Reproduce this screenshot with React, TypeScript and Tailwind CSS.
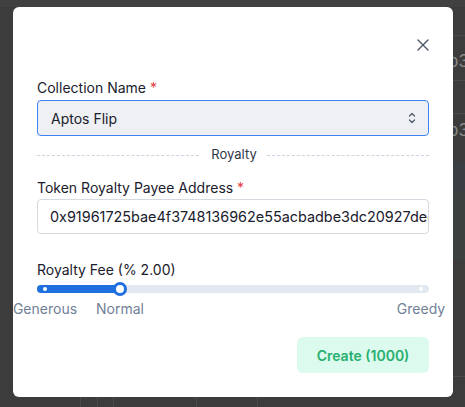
import React from "react";

const font = { fontFamily: "Inter, 'Noto Sans', sans-serif" };

function ChevronUpDown() {
  return (
    <svg width="8" height="12" viewBox="0 0 8 12" fill="none" stroke="#4a5568" strokeWidth="1.2" strokeLinecap="round" strokeLinejoin="round">
      <path d="M1.5 4 L4 1.5 L6.5 4" />
      <path d="M1.5 8 L4 10.5 L6.5 8" />
    </svg>
  );
}

function CloseIcon() {
  return (
    <svg width="12" height="12" viewBox="0 0 12 12" fill="none" stroke="#4a5568" strokeWidth="1.4" strokeLinecap="round">
      <path d="M1 1 L11 11" />
      <path d="M11 1 L1 11" />
    </svg>
  );
}

function BackgroundPage() {
  return (
    <div className="absolute inset-0 flex flex-col bg-[#3c3c3c]">
      <div className="h-[7px] bg-[#414141] shrink-0" />
      <div className="flex-1 flex">
        <div className="flex-1" />
        <div className="w-[17px] flex flex-col text-[17px] text-[#8a8a8a]">
          <div className="h-[29px] border-b border-[#4b4b4b]" />
          <div className="h-[45px] border-b border-[#4b4b4b] flex items-end pb-[6px]">b3</div>
          <div className="h-[33px] border-b border-[#4b4b4b]" />
          <div className="h-[49px] pt-[4px]">b3</div>
          <div className="h-[30px] bg-[#3a3f43]" />
          <div className="h-[67px] bg-[#3a413e]" />
          <div className="h-[40px] bg-[#3e3c3b]" />
          <div className="flex-1 border-b border-[#4b4b4b] mb-[20px]" />
        </div>
      </div>
      <div className="h-[10px] shrink-0 flex">
        <div className="w-[80px]" />
        <div className="w-[17px] border-l border-[#4b4b4b]" />
        <div className="w-[16px] border-l border-[#4b4b4b]" />
        <div className="w-[83px] border-l border-[#4b4b4b]" />
        <div className="w-[61px] border-l border-[#4b4b4b]" />
        <div className="flex-1 border-l border-[#4b4b4b]" />
      </div>
    </div>
  );
}

export default function App() {
  return (
    <div className="relative w-[465px] h-[407px] overflow-hidden" style={font}>
      <BackgroundPage />

      <div className="relative ml-[13px] mt-[7px] w-[440px] h-[390px] bg-white rounded-[6px] px-6 pt-[28px] pb-6 flex flex-col">
        <div className="flex justify-end h-5 items-center shrink-0">
          <button className="w-[12px] h-[12px] flex items-center justify-center">
            <CloseIcon />
          </button>
        </div>

        <div className="mt-[23px] h-5 shrink-0 text-[14px] leading-5 text-[#1a202c]">
          Collection Name <span className="text-[#e53e3e]">*</span>
        </div>
        <div className="mt-[2px] h-[36px] shrink-0 rounded-[4px] border border-[#3b82f6] bg-[#eef0f3] flex items-center justify-between pl-[13px] pr-[12px]">
          <span className="text-[14px] text-[#1a202c]">Aptos Flip</span>
          <ChevronUpDown />
        </div>

        <div className="mt-[9px] h-5 shrink-0 flex items-center">
          <div className="flex-1 border-t border-dashed border-[#cbd5e0]" />
          <span className="pl-3 pr-[10px] text-[13px] text-[#2d3748]">Royalty</span>
          <div className="flex-1 border-t border-dashed border-[#cbd5e0]" />
        </div>

        <div className="mt-[13px] h-5 shrink-0 text-[14px] leading-5 text-[#1a202c]">
          Token Royalty Payee Address <span className="text-[#e53e3e]">*</span>
        </div>
        <input
          readOnly
          value="0x91961725bae4f3748136962e55acbadbe3dc20927dec4a71"
          className="mt-[1px] h-[35px] shrink-0 w-full rounded-[4px] border border-[#d5dae1] bg-white pl-[12px] pr-0 text-[14.4px] text-[#1a202c] outline-none"
          style={font}
        />

        <div className="mt-[26px] h-5 shrink-0 text-[14px] leading-5 text-[#1a202c]">Royalty Fee (% 2.00)</div>

        <div className="relative mt-[2px] h-[14px] shrink-0 flex items-center">
          <div className="relative w-full h-[8px] rounded-full bg-[#e2e8f0] flex items-center justify-between px-[6px]">
            <div className="absolute left-0 top-0 h-full w-[83px] rounded-l-full bg-[#1f6fde]" />
            <div className="relative w-[4px] h-[4px] rounded-full bg-white" />
            <div className="relative w-[4px] h-[4px] rounded-full bg-white" />
          </div>
          <div className="absolute left-[76px] top-0 w-[14px] h-[14px] rounded-full border-[3px] border-[#1f6fde] bg-white" />
        </div>

        <div className="relative mt-[3px] h-5 shrink-0 text-[14px] leading-5 text-[#718096]">
          <span className="absolute left-[8px] -translate-x-1/2 whitespace-nowrap">Generous</span>
          <span className="absolute left-[83px] -translate-x-1/2 whitespace-nowrap">Normal</span>
          <span className="absolute right-[8px] translate-x-1/2 whitespace-nowrap">Greedy</span>
        </div>

        <div className="mt-[18px] flex justify-end shrink-0">
          <button className="h-9 w-[132px] rounded-[6px] bg-[#dcfaee] text-[14px] font-semibold text-[#27b06f]" style={font}>
            Create (1000)
          </button>
        </div>
      </div>
    </div>
  );
}
